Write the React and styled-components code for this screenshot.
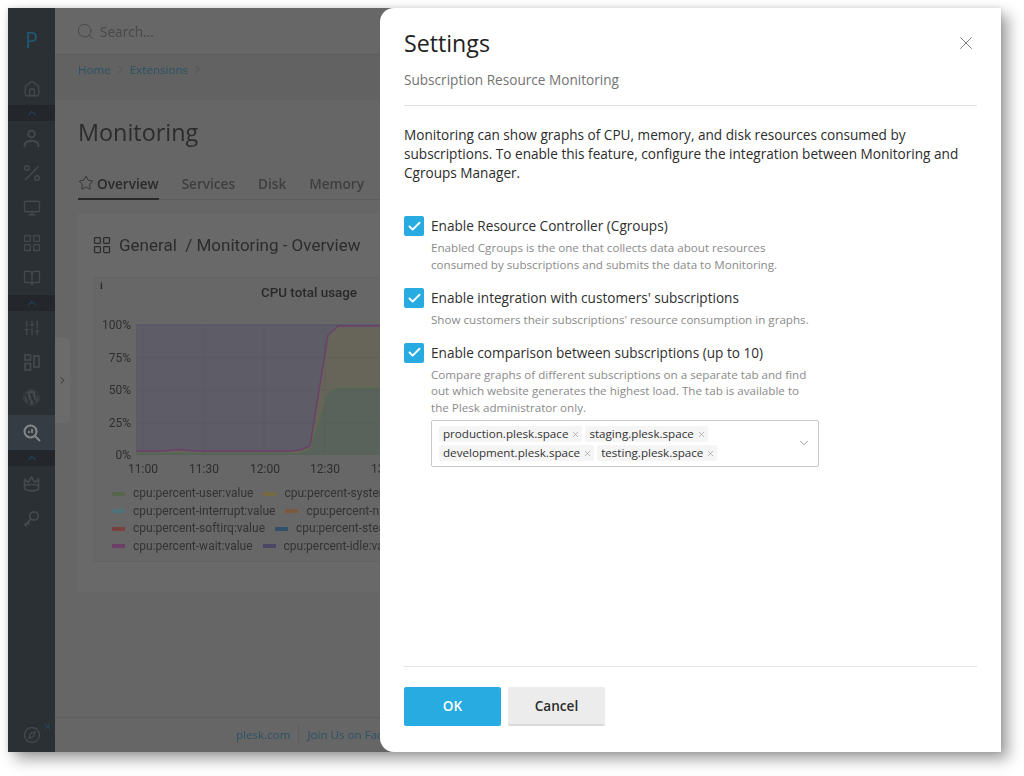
import React from "react";
import styled, { createGlobalStyle } from "styled-components";
import { House, Percent, Monitor, LayoutGrid, BookOpen, SlidersVertical, Compass, Search, ChevronUp, ChevronRight, ChevronDown, Star, X, Check } from "lucide-react";
import { FaWordpress } from "react-icons/fa";

const Global = createGlobalStyle`
  html, body { margin: 0; padding: 0; background: #fff; }
  body { font-family: "Open Sans", "Liberation Sans", sans-serif; width: 1024px; height: 776px; overflow: hidden; }
  * { box-sizing: border-box; }
`;

const Page = styled.div`
  padding: 8px 23px 24px 8px;
  height: 776px;
`;
const Win = styled.div`
  position: relative;
  height: 744px;
  display: flex;
  box-shadow: 7px 7px 14px rgba(0,0,0,.38), 0 0 5px rgba(0,0,0,.12);
`;
const Under = styled.div`
  flex: 1;
  display: flex;
  min-width: 0;
  overflow: hidden;
  filter: blur(0.5px);
  background: #666;
`;
const Side = styled.nav`
  width: 47px;
  flex: none;
  background: #2a3034;
  display: flex;
  flex-direction: column;
  align-items: stretch;
  color: #44494d;
`;
const Logo = styled.div`
  height: 64px;
  padding-top: 12px;
  text-align: center;
  font-size: 21px;
  line-height: 40px;
  color: #1d5a75;
`;
const SideItem = styled.div`
  height: ${p => p.$h || 35}px;
  display: flex;
  align-items: center;
  justify-content: center;
  background: ${p => p.$active ? "#353c43" : "transparent"};
  color: ${p => p.$active ? "#85888a" : "#44494d"};
`;
const Group = styled.div`
  height: 16px;
  background: #23272b;
  display: flex;
  align-items: center;
  justify-content: center;
  color: #1d5a75;
`;
const SideSpacer = styled.div`flex: 1;`;
const SideFoot = styled.div`
  position: relative;
  height: 35px;
  display: flex;
  align-items: center;
  justify-content: center;
  color: #44494d;
`;
const FootX = styled.span`
  position: absolute;
  right: 3px;
  top: 5px;
  color: #1d5a75;
  display: flex;
`;
const Main = styled.div`
  flex: 1;
  min-width: 0;
  display: flex;
  flex-direction: column;
  position: relative;
  overflow: hidden;
`;
const Top = styled.header`
  height: 47px;
  flex: none;
  background: #676767;
  border-bottom: 1px solid #5c5c5c;
  display: flex;
  align-items: center;
  gap: 5px;
  padding-left: 21px;
  color: #454545;
  font-size: 13.6px;
`;
const SearchHint = styled.span`color: #484848;`;
const Crumbs = styled.div`
  height: 45px;
  flex: none;
  background: #626262;
  padding: 7px 0 0 23px;
  display: flex;
  align-items: flex-start;
  gap: 3px;
  font-size: 11.6px;
  line-height: 16px;
  color: #2b5265;
`;
const CrumbSep = styled.span`display: flex; color: #4b4b4b; padding-top: 1px;`;
const Content = styled.div`
  flex: 1;
  padding: 16px 0 0 23px;
  display: flex;
  flex-direction: column;
  min-height: 0;
  width: 900px;
`;
const PageTitle = styled.h1`
  margin: 0;
  font-weight: 400;
  font-size: 23.4px;
  line-height: 33px;
  color: #2c2c2c;
`;
const Tabs = styled.div`
  margin-top: 26px;
  display: flex;
  gap: 23px;
  height: 25px;
  border-bottom: 1px solid #5d5d5d;
  font-size: 13.6px;
  font-weight: 600;
  color: #3a3a3a;
`;
const Tab = styled.div`
  display: flex;
  align-items: flex-start;
  gap: 3px;
  height: 25px;
  line-height: 18px;
  border-bottom: ${p => p.$active ? "2px solid #2a2a2a" : "none"};
  color: ${p => p.$active ? "#2a2a2a" : "#3f3f3f"};
`;
const Dash = styled.section`
  margin-top: 13px;
  height: 379px;
  background: #696969;
  padding: 0 16px;
`;
const DashTitle = styled.div`
  height: 64px;
  display: flex;
  align-items: center;
  gap: 7px;
  font-family: Roboto, sans-serif;
  font-size: 17px;
  color: #2c2c2c;
  svg { margin-left: -2px; }
`;
const ChartCard = styled.div`
  position: relative;
  height: 285px;
  background: #676767;
  border: 1px solid #636363;
  border-radius: 2px;
  font-family: Roboto, sans-serif;
`;
const InfoMark = styled.span`
  position: absolute;
  left: 5px;
  top: 2px;
  font: 700 10px "Liberation Serif", serif;
  color: #2b2b2b;
`;
const ChartTitle = styled.div`
  width: 428px;
  text-align: center;
  padding-top: 6px;
  font-size: 13.4px;
  line-height: 17px;
  font-weight: 500;
  color: #292929;
`;
const Plot = styled.svg`
  display: block;
  margin-top: 7px;
  font-family: Roboto, sans-serif;
  font-size: 12px;
`;
const Legend = styled.div`
  padding: 7px 0 0 17px;
  font-size: 12px;
  line-height: 17.5px;
  color: #333;
`;
const LegendRow = styled.div`
  display: flex;
  align-items: center;
  white-space: nowrap;
`;
const Swatch = styled.i`
  width: 13px;
  height: 4px;
  margin: 0 8px 0 ${p => p.$second ? 10 : 0}px;
  background: ${p => p.$c};
  flex: none;
`;
const Handle = styled.div`
  position: absolute;
  left: 0;
  top: 330px;
  width: 15px;
  height: 85px;
  background: #6b6b6b;
  border-radius: 0 4px 4px 0;
  display: flex;
  align-items: center;
  justify-content: center;
  color: #2b2b2b;
`;
const Foot = styled.footer`
  height: 35px;
  flex: none;
  border-top: 1px solid #5d5d5d;
  display: flex;
  align-items: center;
  padding-left: 181px;
  font-size: 11.6px;
  color: #2b5265;
  white-space: nowrap;
`;
const FootLink = styled.span`
  padding-right: 8px;
  margin-right: 8px;
  border-right: ${p => p.$sep ? "1px solid #5d5d5d" : "none"};
  line-height: 20px;
`;
const Modal = styled.aside`
  position: absolute;
  top: 0;
  right: 0;
  bottom: 0;
  width: 621px;
  background: #fff;
  border-radius: 14px 0 0 14px;
  padding: 0 24px;
  display: flex;
  flex-direction: column;
  color: #2c2c2c;
`;
const ModalHead = styled.div`
  height: 98px;
  flex: none;
  border-bottom: 1px solid #dfe0e6;
  position: relative;
  padding-top: 17px;
`;
const ModalTitle = styled.h2`
  margin: 0;
  font-weight: 400;
  font-size: 23.2px;
  line-height: 36px;
  color: #222;
`;
const Sub = styled.div`
  margin-top: 10px;
  font-size: 13.6px;
  line-height: 18px;
  color: #737373;
`;
const Close = styled.button`
  position: absolute;
  top: 24px;
  right: 0;
  width: 22px;
  height: 22px;
  padding: 0;
  border: 0;
  background: none;
  color: #777;
  display: flex;
`;
const ModalBody = styled.div`
  flex: 1;
  padding-top: 19px;
`;
const Lead = styled.p`
  margin: 0 0 34px;
  font-size: 13.6px;
  line-height: 19px;
  color: #2c2c2c;
`;
const Field = styled.div`
  display: grid;
  grid-template-columns: 20px 1fr;
  column-gap: 7px;
  margin-bottom: ${p => p.$mb}px;
`;
const Box = styled.span`
  width: 20px;
  height: 20px;
  background: #28abe0;
  border-radius: 2px;
  color: #fff;
  display: flex;
  align-items: center;
  justify-content: center;
`;
const FieldLabel = styled.label`
  font-size: 13.6px;
  line-height: 20px;
  color: #2f2f2f;
`;
const Hint = styled.div`
  grid-column: 2;
  margin-top: 4px;
  width: 382px;
  font-size: 11.63px;
  line-height: 16.5px;
  color: #8a8a8a;
`;
const Select = styled.div`
  grid-column: 2;
  margin-top: 4px;
  width: 388px;
  height: 47px;
  border: 1px solid #c9c9c9;
  border-radius: 2px;
  padding: 5px 36px 0 7px;
  position: relative;
`;
const Tags = styled.div`
  display: flex;
  flex-wrap: wrap;
  gap: 3px;
`;
const Tag = styled.span`
  height: 16px;
  line-height: 16px;
  padding: 0 2px 0 4px;
  background: #f5f5f5;
  border-radius: 2px;
  font-size: 11.63px;
  color: #333;
  display: flex;
  align-items: center;
  gap: 3px;
`;
const TagX = styled.span`display: flex; color: #8c8c8c;`;
const Caret = styled.span`
  position: absolute;
  right: 7px;
  top: 15px;
  color: #777;
  display: flex;
`;
const ModalFoot = styled.div`
  height: 86px;
  flex: none;
  border-top: 1px solid #e3e3ea;
  padding-top: 20px;
  display: flex;
  gap: 7px;
  align-items: flex-start;
`;
const Btn = styled.button`
  width: 97px;
  height: 39px;
  border: 0;
  border-bottom: 2px solid ${p => p.$primary ? "#28abe0" : "#dadada"};
  border-radius: 2px;
  background: ${p => p.$primary ? "#28abe0" : "#ececec"};
  color: ${p => p.$primary ? "#fff" : "#2c2c2c"};
  font-family: "Open Sans", sans-serif;
  font-size: 13.6px;
  font-weight: 600;
`;

const UserIcon = () => (
  <svg width="17" height="19" viewBox="0 0 17 19" fill="none" stroke="currentColor" strokeWidth="1.8">
    <circle cx="8.5" cy="5" r="3.4" /><path d="M1.5 18v-1.5c0-3 2.5-4.5 7-4.5s7 1.5 7 4.5V18" />
  </svg>
);
const PanelsIcon = () => (
  <svg width="16" height="17" viewBox="0 0 16 17" fill="none" stroke="currentColor" strokeWidth="1.7">
    <rect x="1" y="1" width="5.5" height="5" /><rect x="1" y="9.5" width="5.5" height="6.5" /><rect x="10" y="2" width="5" height="11" />
  </svg>
);
const StatIcon = () => (
  <svg width="18" height="18" viewBox="0 0 18 18" fill="none" stroke="currentColor" strokeWidth="2">
    <circle cx="7.5" cy="7.5" r="6" /><path d="M12 12l5 5" /><path d="M6 9V7M9 9V5" strokeWidth="1.8" />
  </svg>
);
const CrownIcon = () => (
  <svg width="17" height="17" viewBox="0 0 17 17" fill="none" stroke="currentColor" strokeWidth="1.7" strokeLinejoin="round">
    <path d="M1.5 4l3.5 3.5L8.5 2 12 7.5 15.5 4v9c0 1.800-3 2.800-7 2.800S1.5 14.800 1.5 13z" />
    <path d="M1.5 11c2.500-2 11.500-2 14 0" />
  </svg>
);
const KeyIcon = () => (
  <svg width="17" height="17" viewBox="0 0 17 17" fill="none" stroke="currentColor" strokeWidth="1.8">
    <circle cx="11" cy="6" r="4.200" /><path d="M8 9L1.500 15.500M4.500 12.500l2 2M2.500 14.500l1.500 1.500" />
  </svg>
);

const ICO = { size: 18, strokeWidth: 1.7 };
const legend = [
  [["#56654c", "cpu:percent-user:value"], ["#756a42", "cpu:percent-system:value"]],
  [["#50727a", "cpu:percent-interrupt:value"], ["#7a5a3e", "cpu:percent-nice:value"]],
  [["#7a423e", "cpu:percent-softirq:value"], ["#30526c", "cpu:percent-steal:value"]],
  [["#6c4069", "cpu:percent-wait:value"], ["#4b4765", "cpu:percent-idle:value"]],
];
const yTicks = [["100%", 21], ["75%", 53.5], ["50%", 86], ["25%", 119], ["0%", 151]];
const xTicks = [["11:00", 48], ["11:30", 109], ["12:00", 170], ["12:30", 230], ["13:00", 291]];

export default function App() {
  return (
    <Page>
      <Global />
      <Win>
        <Under>
          <Side>
            <Logo>P</Logo>
            <SideItem $h={33}><House {...ICO} /></SideItem>
            <Group><ChevronUp size={12} /></Group>
            <SideItem $h={34}><UserIcon /></SideItem>
            <SideItem><Percent size={22} strokeWidth={1.6} /></SideItem>
            <SideItem><Monitor {...ICO} /></SideItem>
            <SideItem><LayoutGrid size={20} strokeWidth={1.6} /></SideItem>
            <SideItem><BookOpen {...ICO} /></SideItem>
            <Group><ChevronUp size={12} /></Group>
            <SideItem $h={34}><SlidersVertical {...ICO} /></SideItem>
            <SideItem><PanelsIcon /></SideItem>
            <SideItem><FaWordpress size={17} /></SideItem>
            <SideItem $active><StatIcon /></SideItem>
            <Group><ChevronUp size={12} /></Group>
            <SideItem><CrownIcon /></SideItem>
            <SideItem><KeyIcon /></SideItem>
            <SideSpacer />
            <SideFoot><Compass {...ICO} /><FootX><X size={9} /></FootX></SideFoot>
          </Side>
          <Main>
            <Top><Search size={19} strokeWidth={1.1} /><SearchHint>Search...</SearchHint></Top>
            <Crumbs>
              Home<CrumbSep><ChevronRight size={13} strokeWidth={1.3} /></CrumbSep>Extensions<CrumbSep><ChevronRight size={13} strokeWidth={1.3} /></CrumbSep>
            </Crumbs>
            <Content>
              <PageTitle>Monitoring</PageTitle>
              <Tabs>
                <Tab $active><Star size={16} strokeWidth={1.2} />Overview</Tab>
                <Tab>Services</Tab>
                <Tab>Disk</Tab>
                <Tab>Memory</Tab>
              </Tabs>
              <Dash>
                <DashTitle><LayoutGrid size={20} strokeWidth={1.5} />General&nbsp;&nbsp;/ Monitoring - Overview</DashTitle>
                <ChartCard>
                  <InfoMark>i</InfoMark>
                  <ChartTitle>CPU total usage</ChartTitle>
                  <Plot width="700" height="170" viewBox="0 0 700 170">
                    <path d="M41 143H70L83 141.500L100 143H195L205 142L215 138L233 27L243 18H700V17H41Z" fill="#5e5d67" />
                    <path d="M41 145H205L215 141L233 85L243 80H700V18H243L233 27L215 138L205 142L195 143H100L83 141.500L70 143H41Z" fill="#67645a" />
                    <path d="M41 147V145H205L215 141L233 85L243 80H700V147Z" fill="#59635b" />
                    <path d="M41 49.500H700M41 82H700M41 115H700M48 17V147M109 17V147M169 17V147M230 17V147M291 17V147" stroke="#000" strokeOpacity=".04" strokeWidth="1" fill="none" />
                    <path d="M41 17H700" stroke="#55506f" strokeWidth="1" fill="none" />
                    <path d="M41 143H70L83 141.500L100 143H195L205 142L215 138L233 27L243 18H700" stroke="#6c3f6a" strokeWidth="1.400" fill="none" />
                    <path d="M41 145H205L215 141L233 85L243 80H700" stroke="#566b4c" strokeWidth="1" fill="none" />
                    {yTicks.map(([t, y]) => <text key={t} x="36" y={y} textAnchor="end" fill="#2e2e2e">{t}</text>)}
                    {xTicks.map(([t, x]) => <text key={t} x={x} y="165" textAnchor="middle" fill="#2e2e2e">{t}</text>)}
                  </Plot>
                  <Legend>
                    {legend.map(row => (
                      <LegendRow key={row[0][1]}>
                        <Swatch $c={row[0][0]} />{row[0][1]}
                        <Swatch $second $c={row[1][0]} />{row[1][1]}
                      </LegendRow>
                    ))}
                  </Legend>
                </ChartCard>
              </Dash>
            </Content>
            <Foot><FootLink $sep>plesk.com</FootLink><FootLink>Join Us on Facebook</FootLink></Foot>
            <Handle><ChevronRight size={11} strokeWidth={2} /></Handle>
          </Main>
        </Under>
        <Modal>
          <ModalHead>
            <ModalTitle>Settings</ModalTitle>
            <Sub>Subscription Resource Monitoring</Sub>
            <Close aria-label="Close"><X size={22} strokeWidth={1} /></Close>
          </ModalHead>
          <ModalBody>
            <Lead>Monitoring can show graphs of CPU, memory, and disk resources consumed by subscriptions. To enable this feature, configure the integration between Monitoring and Cgroups Manager.</Lead>
            <Field $mb={15}>
              <Box><Check size={15} strokeWidth={3} /></Box>
              <FieldLabel>Enable Resource Controller (Cgroups)</FieldLabel>
              <Hint>Enabled Cgroups is the one that collects data about resources consumed by subscriptions and submits the data to Monitoring.</Hint>
            </Field>
            <Field $mb={14}>
              <Box><Check size={15} strokeWidth={3} /></Box>
              <FieldLabel>Enable integration with customers' subscriptions</FieldLabel>
              <Hint>Show customers their subscriptions' resource consumption in graphs.</Hint>
            </Field>
            <Field $mb={0}>
              <Box><Check size={15} strokeWidth={3} /></Box>
              <FieldLabel>Enable comparison between subscriptions (up to 10)</FieldLabel>
              <Hint>Compare graphs of different subscriptions on a separate tab and find out which website generates the highest load. The tab is available to the Plesk administrator only.</Hint>
              <Select>
                <Tags>
                  {["production.plesk.space", "staging.plesk.space", "development.plesk.space", "testing.plesk.space"].map(t => (
                    <Tag key={t}>{t}<TagX><X size={9} strokeWidth={1.5} /></TagX></Tag>
                  ))}
                </Tags>
                <Caret><ChevronDown size={14} strokeWidth={1.3} /></Caret>
              </Select>
            </Field>
          </ModalBody>
          <ModalFoot>
            <Btn $primary>OK</Btn>
            <Btn>Cancel</Btn>
          </ModalFoot>
        </Modal>
      </Win>
    </Page>
  );
}
